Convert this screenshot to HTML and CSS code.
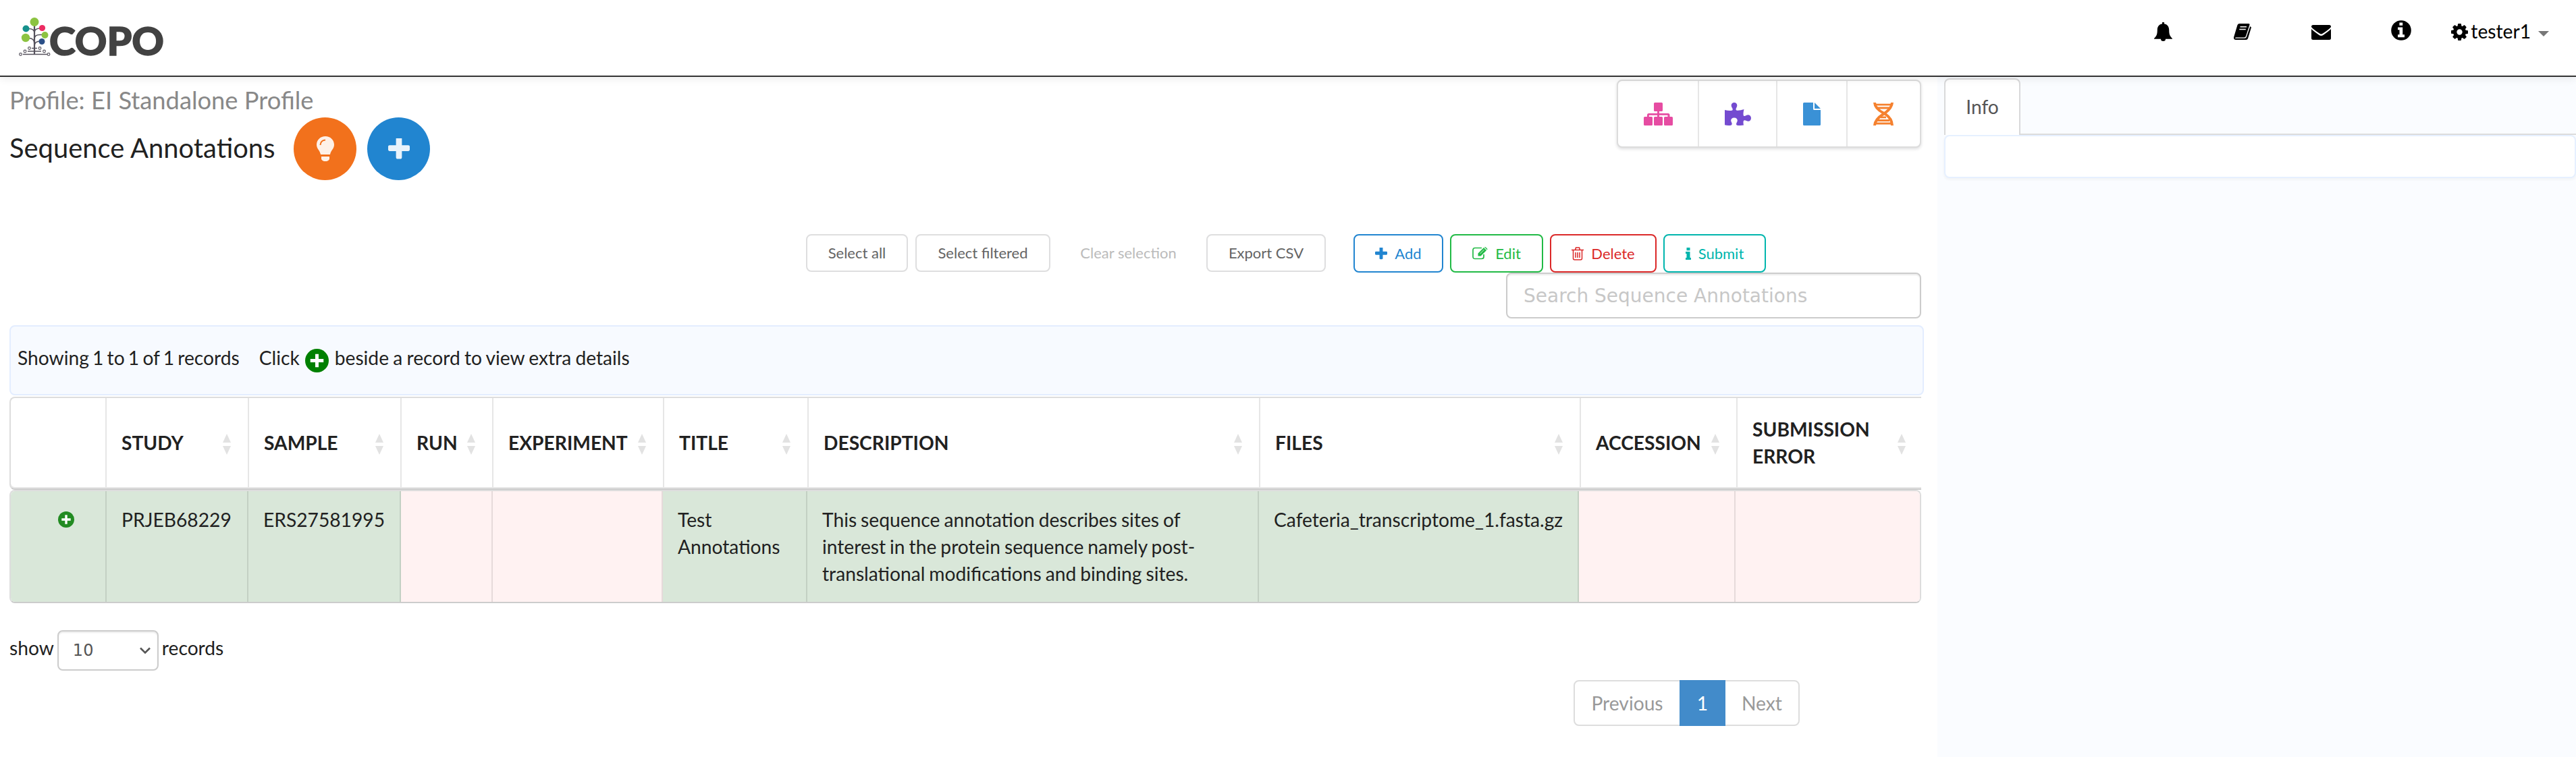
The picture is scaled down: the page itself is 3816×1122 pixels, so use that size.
FILE: index.html
```html
<!DOCTYPE html>
<html lang="en">
<head>
<meta charset="utf-8">
<title>COPO - Sequence Annotations</title>
<link rel="stylesheet" href="styles.css">
</head>
<body>
<svg width="0" height="0" class="defs">
  <symbol id="plus" viewBox="192 192 1408 1408"><path d="M1600 736v192q0 40-28 68t-68 28h-416v416q0 40-28 68t-68 28h-192q-40 0-68-28t-28-68v-416h-416q-40 0-68-28t-28-68v-192q0-40 28-68t68-28h416v-416q0-40 28-68t68-28h192q40 0 68 28t28 68v416h416q40 0 68 28t28 68z"/></symbol>
  <symbol id="plus-circle" viewBox="0 0 24 24"><circle cx="12" cy="12" r="12"/><path fill="#fff" d="M10.300 5.300h3.400v5h5v3.400h-5v5h-3.400v-5h-5v-3.400h5z"/></symbol>
</svg>
<header class="topbar">
  <a class="logo">
    <svg width="250" height="86" viewBox="10 12 250 86">
      <g fill="none" stroke="#55515c" stroke-width="1.700">
        <path stroke-width="2.200" d="M51 38V80"/>
        <path d="M42 42.500c6 0 9 2 9 6M60 42c-6 0-9 2-9 6M42 56.500c6 0 9 3 9 8M64 51.500h-5c-5 0-8 2-8 6M60 61c-6 0-9 2-9 7M34 80.500H70M41 76H61M47 71.500H55"/>
        <g stroke-width="1.100" fill="#fff"><circle cx="30.500" cy="80.500" r="1.900"/><circle cx="72" cy="80.500" r="1.900"/><circle cx="37" cy="76" r="1.900"/><circle cx="65.500" cy="76" r="1.900"/><circle cx="43.500" cy="71.500" r="1.900"/><circle cx="59" cy="71.500" r="1.900"/></g>
      </g>
      <circle cx="51" cy="32.500" r="6.500" fill="#8cc341"/><circle cx="38.500" cy="42.500" r="5" fill="#16918c"/><circle cx="62.500" cy="41.500" r="4.600" fill="#ec2b62"/><circle cx="66.500" cy="52" r="5" fill="#8cc341"/><circle cx="38" cy="56" r="6.200" fill="#8cc341"/><circle cx="62" cy="61.500" r="4.500" fill="#2b4f87"/>
      <text class="wordmark" x="73" y="82.300" textLength="170" lengthAdjust="spacingAndGlyphs">COPO</text>
    </svg>
  </a>
  <nav class="topnav">
    <svg class="bell" width="27" height="28" viewBox="0 0 27 28"><path d="M12 0h3v2.200c4.600.8 7.200 4.400 7.200 9 0 6.800 1.300 9.500 4.800 12.800v.800H0V24c3.500-3.300 4.800-6 4.800-12.800 0-4.600 2.600-8.200 7.200-9zM10 24.800h7a3.500 3.200 0 0 1-7 0z"/></svg>
    <svg class="book" width="26" height="24" viewBox="0 0 26 24"><path d="M8.500 0H22q2 0 1.400 2L18 18.500q-.6 2-2.600 2H3.600q-1.800 0-1.400 1.300h14q2 0 2.700-2L24.300 4l1.700 1.500-5 16.500q-.7 2-2.700 2H3q-3.500 0-2.900-4L5.500 2Q6.300 0 8.500 0z"/><path stroke="#fff" stroke-width="1.500" d="M9.500 4.800h9.500M8.300 8.600h9.500"/></svg>
    <svg class="mail" width="29" height="22" viewBox="0 0 29 22"><path d="M2.500 0h24Q29 0 29 2.500V3Q27 6 17 12.600q-2.500 1.700-5 0Q2 6 0 3v-.5Q0 0 2.500 0zM0 6q3 3 11.500 9 3 2 6 0Q26 9 29 6v13.500q0 2.500-2.500 2.500h-24Q0 22 0 19.500z"/></svg>
    <svg class="info" width="30" height="30" viewBox="0 0 30 30"><circle cx="15" cy="15" r="14.800"/><path fill="#fff" d="M12.400 3.500h4.800v4.300h-4.800zM10 10.500h7.200v10.800H20v3.900H10v-3.900h2.500v-7H10z"/></svg>
    <span class="user">
      <svg width="25" height="25" viewBox="128 128 1536 1536"><path d="M1152 896q0-106-75-181t-181-75-181 75-75 181 75 181 181 75 181-75 75-181zm512-109v222q0 12-8 23t-20 13l-185 28q-19 54-39 91 35 50 107 138 10 12 10 25t-9 23q-27 37-99 108t-94 71q-12 0-26-9l-138-108q-44 23-91 38-16 136-29 186-7 28-36 28h-222q-14 0-24.500-8.500t-11.500-21.500l-28-184q-49-16-90-37l-141 107q-10 9-25 9-14 0-25-11-126-114-165-168-7-10-7-23 0-12 8-23 15-21 51-66.500t54-70.500q-27-50-41-99l-183-27q-13-2-21-12.500t-8-23.500v-222q0-12 8-23t19-13l186-28q14-46 39-92-40-57-107-138-10-12-10-24 0-10 9-23 26-36 98.500-107.500t94.500-71.500q13 0 26 10l138 107q44-23 91-38 16-136 29-186 7-28 36-28h222q14 0 24.500 8.500t11.500 21.500l28 184q49 16 90 37l142-107q9-9 24-9 13 0 25 10 129 119 165 170 7 8 7 22 0 12-8 23-15 21-51 66.500t-54 70.500q26 50 41 98l183 28q13 2 21 12.500t8 23.500z"/></svg>
      <span>tester1</span><i class="caret"></i>
    </span>
  </nav>
</header>
<main class="layout">
  <section class="content">
    <div class="page-head">
      <div class="titles">
        <div class="profile">Profile: EI Standalone Profile</div>
        <div class="title-row">
          <h1>Sequence Annotations</h1>
          <button class="round orange"><svg width="26" height="37" viewBox="0 0 26 37"><path d="M13 0C20.500 0 26 5.500 26 12.500c0 6-5 8.500-6 14.500H6C5 21 0 18.500 0 12.500 0 5.500 5.500 0 13 0zM7 30h12v4q-2 3-4 3h-4q-2 0-4-3z"/><path d="M5.500 13Q6 6 13 5.500" fill="none" stroke="#f2711c" stroke-width="2"/></svg></button>
          <button class="round blue"><svg width="32" height="32"><use href="#plus"/></svg></button>
        </div>
      </div>
      <div class="quick">
        <span class="q1"><svg width="43" height="34" viewBox="0 0 43 34" fill="#e64ca2"><path d="M16.500 0h10q1.500 0 1.500 1.500v10q0 1.500-1.500 1.500h-3.600v3H36q2.500 0 2.500 2.500V21h3q1.500 0 1.500 1.500v10q0 1.500-1.500 1.500h-10q-1.500 0-1.500-1.500v-10q0-1.500 1.500-1.500h4v-2.200H22.900V21h3.600q1.500 0 1.500 1.500v10q0 1.500-1.500 1.500h-10q-1.500 0-1.500-1.500v-10q0-1.500 1.500-1.500h3.600v-2.200H7.800V21h3.700q1.500 0 1.500 1.500v10q0 1.500-1.500 1.500h-10Q0 34 0 32.500v-10Q0 21 1.500 21H5v-2.500Q5 16 7.500 16h12.600v-3h-3.600q-1.500 0-1.500-1.500v-10Q15 0 16.500 0z"/></svg></span>
        <span class="q2"><svg width="39" height="34" viewBox="0 0 39 34" fill="#744bd0"><path d="M0 11q6 1.500 10.500.8c2.200-.6 1-3-.1-4.700C8.500 3.500 10.500 0 14 0s5.500 3.500 3.600 7c-1.200 2-2 4.300.6 4.700Q23 12 28.500 10c-.7 3-1.400 6-.8 8.700.5 2.200 2.300 1.400 4 .4C35 17.200 39 19 39 23s-3.500 6-7 4c-2-1.200-4-1.300-4.400 1-.3 2 .1 4 .4 5.500q-5 .9-9.500.2c-2.300-.6-1.500-3-.3-5 1.500-3 0-6.200-4.200-6.200-4.300 0-5.800 3.300-4.200 6.200 1.200 2 1.400 4.300-.8 5Q4 34.300 0 33.200z"/></svg></span>
        <span class="q3"><svg width="26" height="34" viewBox="0 0 26 34" fill="#3a91d6"><path d="M1.500 0H15v9.500q0 1.500 1.500 1.500H26v21.500q0 1.500-1.500 1.500h-23Q0 34 0 32.500v-31Q0 0 1.500 0zM17 0l9 9h-9z"/></svg></span>
        <span class="q4"><svg width="30" height="34" viewBox="0 0 30 34" fill="none" stroke="#f5812f" stroke-width="4"><path d="M2 0Q2.500 9 15 15.500T28 34M28 0Q27.500 9 15 17T2 34"/><path stroke-width="2.800" d="M3 3.200h24M6 8h18M6 26.500h18M3 31h24M11 21.800h8"/></svg></span>
      </div>
    </div>
    <div class="actions">
      <button class="grey b1">Select all</button>
      <button class="grey b2">Select filtered</button>
      <button class="grey b3 off">Clear selection</button>
      <button class="grey b4">Export CSV</button>
      <button class="c-blue b5"><svg width="18" height="18" fill="currentColor"><use href="#plus"/></svg><span>Add</span></button>
      <button class="c-green b6"><svg width="23" height="19" viewBox="0 0 23 19" fill="none" stroke="currentColor"><path stroke-width="1.700" d="M17 11v3.500q0 3-3 3H4q-3 0-3-3v-10q0-3 3-3h10"/><path fill="currentColor" stroke="none" d="M8.500 9.500 17 1l4 4-8.500 8.500h-4zM18 .2q1-.5 2 .3l2 2q.8 1 0 2z"/><path stroke="#fff" stroke-width=".8" d="m11.500 10 6-6"/></svg><span>Edit</span></button>
      <button class="c-red b7"><svg width="18" height="20" viewBox="0 0 18 20" fill="none" stroke="currentColor" stroke-width="1.500"><path d="M0 4.500h18M5.500 4.500l1-3.500h5l1 3.500M2.500 5v12q0 2 2 2h9q2 0 2-2V5M6 8v8M9 8v8M12 8v8"/></svg><span>Delete</span></button>
      <button class="c-teal b8"><svg width="8" height="18" viewBox="0 0 8 18"><path fill="currentColor" d="M1.500 0h5v4.200h-5zM0 6h6.500v9H8v3H0v-3h1.500V9H0z"/></svg><span>Submit</span></button>
    </div>
    <div class="search-row"><input class="search" placeholder="Search Sequence Annotations"></div>
    <div class="notice">
      <span class="count">Showing 1 to 1 of 1 records</span>
      <span>Click</span>
      <svg width="35" height="35" fill="#008000"><use href="#plus-circle"/></svg>
      <span>beside a record to view extra details</span>
    </div>
    <div class="grid-table">
      <div class="thead">
        <div></div>
        <div><span>STUDY</span><i class="sort"></i></div>
        <div><span>SAMPLE</span><i class="sort"></i></div>
        <div><span>RUN</span><i class="sort"></i></div>
        <div><span>EXPERIMENT</span><i class="sort"></i></div>
        <div><span>TITLE</span><i class="sort"></i></div>
        <div><span>DESCRIPTION</span><i class="sort"></i></div>
        <div><span>FILES</span><i class="sort"></i></div>
        <div><span>ACCESSION</span><i class="sort"></i></div>
        <div><span>SUBMISSION<br>ERROR</span><i class="sort"></i></div>
      </div>
      <div class="trow">
        <div class="ok toggle"><svg width="24" height="24" fill="#228b22"><use href="#plus-circle"/></svg></div>
        <div class="ok">PRJEB68229</div>
        <div class="ok">ERS27581995</div>
        <div class="bad"></div>
        <div class="bad"></div>
        <div class="ok">Test<br>Annotations</div>
        <div class="ok">This sequence annotation describes sites of<br>interest in the protein sequence namely post-<br>translational modifications and binding sites.</div>
        <div class="ok">Cafeteria_transcriptome_1.fasta.gz</div>
        <div class="bad"></div>
        <div class="bad"></div>
      </div>
    </div>
    <div class="length">
      <span>show</span>
      <span class="select"><span>10</span><svg width="16" height="11" viewBox="0 0 16 11" fill="none" stroke="#555" stroke-width="2.600"><path d="M1 1.500l7 7 7-7"/></svg></span>
      <span>records</span>
    </div>
    <div class="pager"><span class="prev">Previous</span><span class="cur">1</span><span class="next">Next</span></div>
  </section>
  <aside class="side">
    <div class="tabs"><span class="tab">Info</span></div>
    <div class="panel"></div>
  </aside>
</main>
</body>
</html>
```
FILE: styles.css
```css
* { box-sizing: border-box; }
body { margin: 0; background: #fff; color: #212121; font: 28.200px/40px Lato, "Liberation Sans", sans-serif; height: 1122px; overflow: hidden; text-rendering: optimizeLegibility; }
svg { display: block; flex: none; }
.defs { position: absolute; }
button { font-family: inherit; background: #fff; margin: 0; padding: 0; border: 0; display: flex; align-items: center; justify-content: center; text-rendering: inherit; }

.topbar { position: relative; z-index: 1; height: 114px; border-bottom: 2px solid #333; background: #fff; box-shadow: 0 2px 12px rgba(0, 0, 0, .09); display: flex; justify-content: space-between; }
.logo { padding: 12px 0 0 10px; }
.wordmark { font: 900 57px Lato, sans-serif; fill: #424242; stroke: #424242; stroke-width: 1.500px; }
.topnav { display: flex; align-items: flex-start; color: #000; }
.bell { margin: 33px 91px 0 0; }
.book { margin: 35px 89px 0 0; }
.mail { margin: 37px 89px 0 0; }
.info { margin: 30px 59px 0 0; }
.user { display: flex; align-items: flex-start; height: 40px; margin: 26px 40px 0 0; }
.user svg { margin-top: 9px; }
.user span { margin: 0 11px 0 4px; }
.caret { border: 8px solid transparent; border-top-color: #777; border-bottom: 0; margin-top: 20px; }

.layout { display: flex; height: 1008px; }
.content { width: 2870px; padding: 0 20px 0 14px; }
.side { flex: 1; background: #fafcff; padding: 2px 0 0 10px; }

.page-head { display: flex; justify-content: space-between; height: 233px; padding-right: 4px; }
.profile { font-size: 36.300px; line-height: 44px; color: #888; margin-top: 12px; height: 48px; white-space: nowrap; }
.title-row { display: flex; align-items: center; height: 93px; }
.title-row h1 { font-size: 39.900px; font-weight: 400; line-height: 44px; margin: 0; padding-bottom: 4px; width: 421px; white-space: nowrap; }
.round { width: 93px; height: 93px; border-radius: 50%; margin-right: 16px; fill: rgba(255, 255, 255, .9); }
.round.orange { background: #f2711c; }
.round.blue { background: #2185d0; }
.quick { display: flex; height: 101px; margin-top: 4px; border: 2px solid #dcdcdc; border-radius: 8px; background: #fff; box-shadow: 0 2px 4px rgba(34, 36, 38, .15); }
.quick span { display: flex; align-items: center; justify-content: center; border-right: 2px solid #e6e6e6; }
.q1 { width: 120px; } .q2 { width: 116px; } .q3 { width: 104px; } .quick .q4 { width: 107px; border: 0; padding-right: 2px; }

.actions { display: flex; height: 57px; margin-left: 1180px; align-items: flex-start; }
.actions button { height: 57px; border: 2px solid; border-radius: 8px; font-size: 22px; line-height: 30px; white-space: nowrap; gap: 11px; }
.actions .grey { height: 56px; border-color: #dededf; color: #646464; }
.actions .off { border-color: transparent; color: #bbb; }
.b1 { width: 151px; margin-right: 11px; } .b2 { width: 200px; margin-right: 11px; } .b3 { width: 209px; margin-right: 11px; } .b4 { width: 177px; margin-right: 41px; }
.b5 { width: 133px; margin-right: 10px; } .b6 { width: 138px; margin-right: 10px; } .b7 { width: 158px; margin-right: 10px; } .b8 { width: 152px; }
.c-blue { color: #2185d0; } .c-green { color: #21ba45; } .c-red { color: #db2828; } .c-teal { color: #00b5ad; }

.search-row { display: flex; justify-content: flex-end; padding-right: 4px; height: 78px; }
.search { width: 615px; height: 68px; border: 2px solid #ccc; border-radius: 8px; padding: 0 24px; font: 28px "DejaVu Sans", sans-serif; box-shadow: inset 0 2px 2px rgba(0, 0, 0, .075); }
.search::placeholder { color: #c7c7c7; opacity: 1; }

.notice { height: 104px; margin-bottom: 2px; background: #f7faff; border: 2px solid #e3edff; border-radius: 8px; display: flex; align-items: flex-start; padding: 26px 10px 0; white-space: nowrap; word-spacing: -1px; }
.notice .count { margin-right: 29px; word-spacing: -2px; }
.notice svg { margin: 7px 9px 0 8px; }

.grid-table { width: 2832px; }
.thead, .trow { display: grid; }
.thead { grid-template-columns: 142px 211px 226px 136px 253px 214px 669px 475px 232px 1fr; height: 138px; border: 2px solid #ddd; border-right: 0; border-bottom: 2px solid #ccc; border-radius: 8px 0 0 8px; box-shadow: inset 0 -2px #e6e6e6; }
.thead div { display: flex; align-items: center; justify-content: space-between; padding: 18px 25px 20px 22px; font-weight: 700; border-right: 2px solid #e6e6e6; white-space: nowrap; }
.thead div:last-child { border-right: 0; padding-right: 23px; }
.sort { display: flex; flex-direction: column; gap: 5px; margin-top: 4px; }
.sort::before, .sort::after { content: ""; border: 6.500px solid transparent; }
.sort::before { border-top: 0; border-bottom: 13px solid #e2e2e2; }
.sort::after { border-bottom: 0; border-top: 13px solid #e2e2e2; }
.trow { grid-template-columns: 142px 210px 226px 136px 252px 214px 669px 474px 232px 1fr; height: 168px; border: 2px solid #ddd; border-bottom-color: #ccc; border-radius: 8px; overflow: hidden; }
.trow div { padding: 22px 0 0 22px; white-space: nowrap; word-spacing: -1.200px; border-right: 2px solid; }
.trow .ok { background: #d9e7d9; border-color: #c3d0c3; }
.trow .bad { background: #fff2f2; border-color: #e6dada; }
.trow div:last-child { border-right: 0; }
.trow .toggle { padding: 30px 0 0 70px; }

.length { display: flex; align-items: flex-start; height: 74px; margin-top: 40px; line-height: 53px; }
.select { display: flex; align-items: center; justify-content: space-between; width: 150px; height: 60px; margin: 0 5px; padding: 0 10px 0 21px; border: 2px solid #ccc; border-radius: 8px; color: #555; font: 24px "DejaVu Sans", sans-serif; box-shadow: inset 0 2px 2px rgba(0, 0, 0, .075); }
.pager { display: flex; width: 335px; height: 68px; margin-left: 2317px; border: 2px solid #ddd; border-radius: 8px; color: #999; line-height: 64px; text-align: center; }
.prev { width: 155px; }
.cur { width: 68px; margin: -2px 0; line-height: 68px; background: #428bca; color: #fff; }
.next { flex: 1; }

.tabs { display: flex; height: 84px; border-bottom: 2px solid #dcdcdc; }
.tab { height: 84px; width: 113px; border: 2px solid #d9d9da; border-bottom: 0; border-radius: 8px 8px 0 0; background: #fff; color: #555; text-align: center; line-height: 80px; }
.panel { height: 64px; border: 2px solid #e6f0ff; border-radius: 8px; background: #fff; box-shadow: 0 2px 4px rgba(34, 36, 38, .05); }
```
